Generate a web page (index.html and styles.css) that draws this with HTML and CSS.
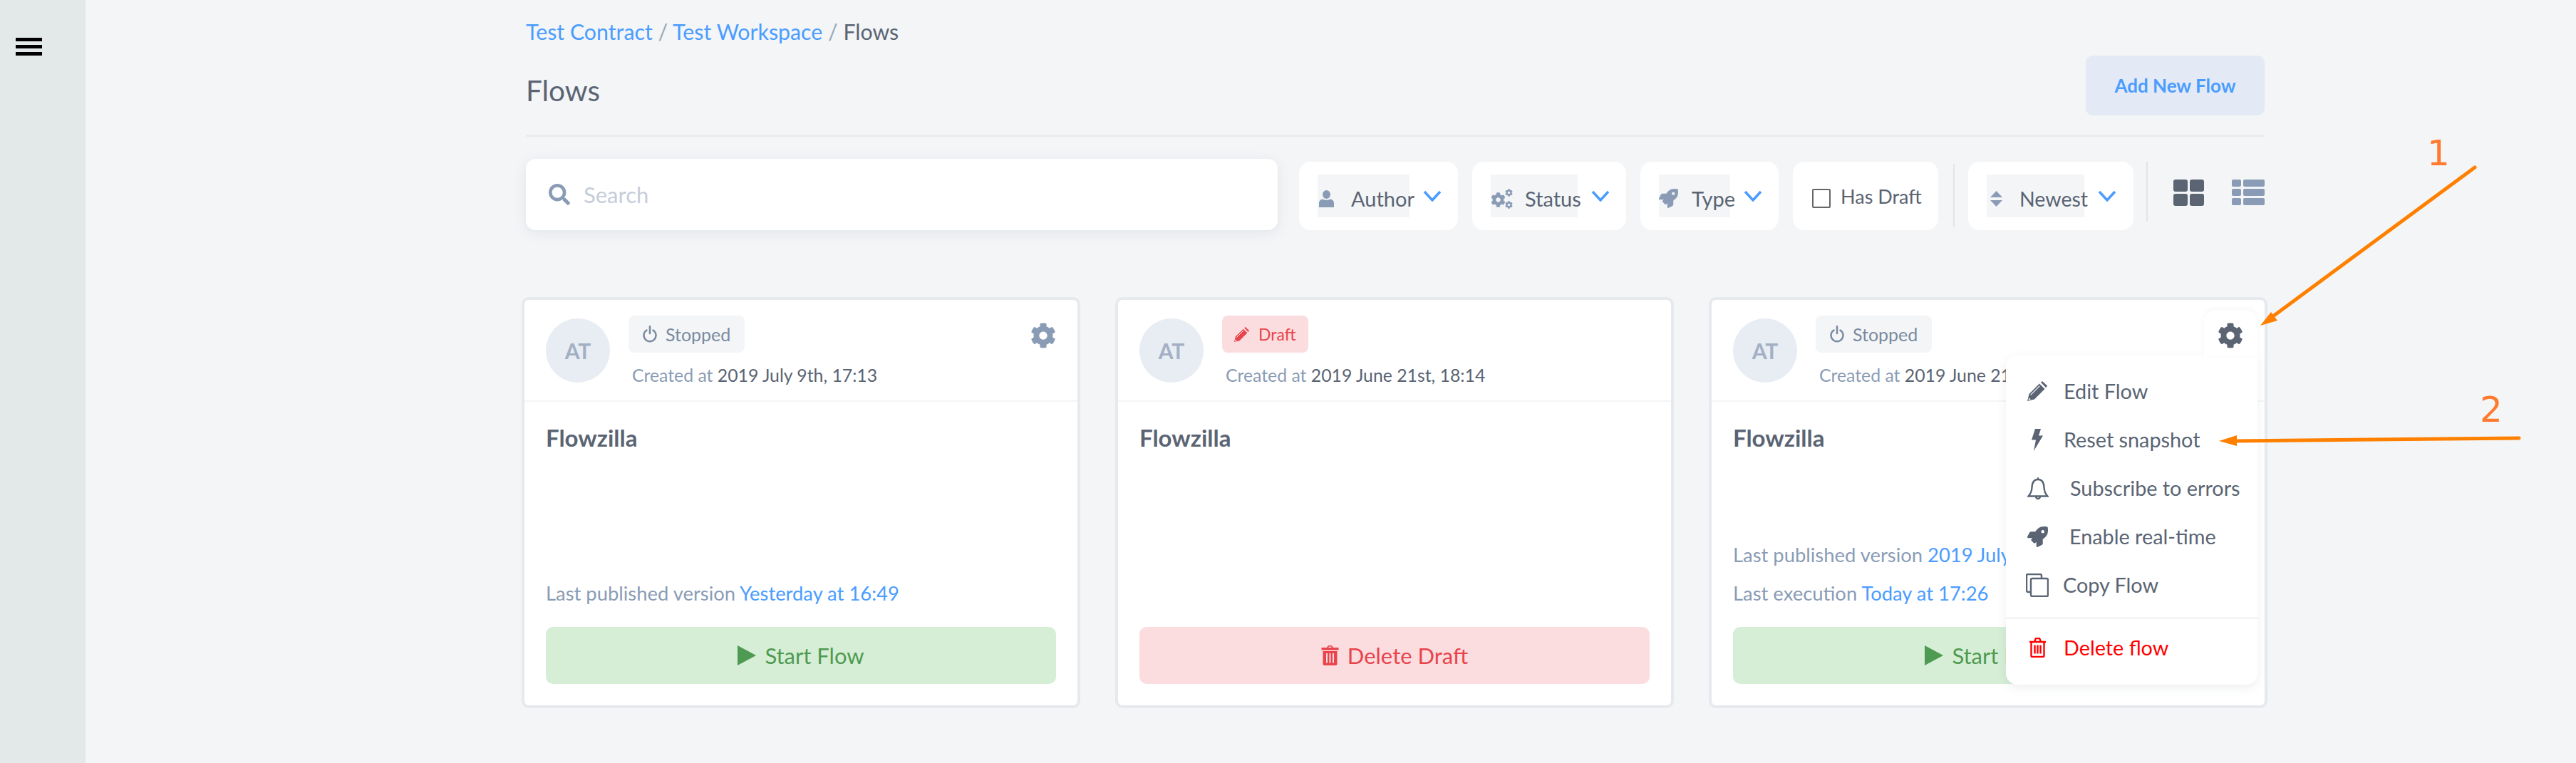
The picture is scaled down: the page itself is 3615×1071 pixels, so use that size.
FILE: index.html
```html
<!DOCTYPE html>
<html lang="en">
<head>
    <meta charset="UTF-8">
    <title>Flows</title>
    <link rel="stylesheet" href="styles.css">
</head>
<body>
    <svg class="icon-defs" width="0" height="0">
        <symbol id="i-gear" viewBox="0 0 512 512"><path d="M487.4 315.7l-42.6-24.6c4.3-23.2 4.3-47 0-70.2l42.6-24.6c4.9-2.8 7.1-8.6 5.5-14-11.1-35.6-30-67.8-54.7-94.6-3.8-4.1-10-5.1-14.8-2.3L380.8 110c-17.9-15.4-38.5-27.3-60.8-35.1V25.8c0-5.6-3.9-10.5-9.4-11.7-36.7-8.2-74.3-7.8-109.2 0-5.5 1.2-9.4 6.1-9.4 11.7V75c-22.2 7.9-42.8 19.8-60.8 35.1L88.7 85.5c-4.9-2.8-11-1.9-14.8 2.3-24.7 26.7-43.6 58.9-54.7 94.6-1.7 5.4.6 11.2 5.5 14L67.3 221c-4.3 23.2-4.3 47 0 70.2l-42.6 24.6c-4.9 2.8-7.1 8.6-5.5 14 11.1 35.6 30 67.8 54.7 94.6 3.8 4.1 10 5.1 14.8 2.3l42.6-24.6c17.9 15.4 38.5 27.3 60.8 35.1v49.2c0 5.6 3.9 10.5 9.4 11.7 36.7 8.2 74.3 7.8 109.2 0 5.5-1.2 9.4-6.1 9.4-11.7v-49.2c22.2-7.9 42.8-19.8 60.8-35.1l42.6 24.6c4.9 2.8 11 1.9 14.8-2.3 24.7-26.7 43.6-58.9 54.7-94.6 1.5-5.5-.7-11.3-5.6-14.1zM256 336c-44.1 0-80-35.9-80-80s35.9-80 80-80 80 35.9 80 80-35.9 80-80 80z"/></symbol>
        <symbol id="i-rocket" viewBox="0 0 512 512"><path d="M505.12 19.09c-1.19-5.53-6.66-11-12.21-12.19C460.72 0 435.51 0 410.41 0 307.18 0 245.27 55.2 199.05 128H94.84c-16.35.02-35.56 11.88-42.89 26.48L2.52 253.3A28.4 28.4 0 0 0 0 264a24 24 0 0 0 24 24h103.81l-22.47 22.47c-11.37 11.36-13 32.26 0 45.25l50.9 50.9c11.16 11.19 32.16 13.16 45.28 0L224 384.16V488a24 24 0 0 0 24 24 28.56 28.56 0 0 0 10.71-2.52l98.73-49.39c14.63-7.3 26.51-26.5 26.51-42.86V312.8c72.6-46.31 128.03-108.41 128.03-211.09.02-25.2.02-50.41-6.86-82.62zM384.04 168a40 40 0 1 1 40.01-40 40 40 0 0 1-40.01 40z"/></symbol>
        <symbol id="i-pencil" viewBox="0 0 28 28"><path d="M0 28L2.5 18 17 3.5 24.5 11 10 25.5z"/><path d="M19 1.8L21 0l7 6.5-1.8 2.8z"/><path d="M4.6 19.4L17.4 6.6" stroke="#fff" stroke-width="1.2"/><path d="M1.5 26.5l.8-3.2 2.4 2.4z" fill="#fff"/></symbol>
        <symbol id="i-trash" viewBox="0 0 24 28"><path fill-rule="evenodd" d="M7.5 3L9 .8C9.3.3 9.8 0 10.4 0h3.2c.6 0 1.1.3 1.4.8L16.5 3H23c.6 0 1 .4 1 1v2.5H0V4c0-.6.4-1 1-1zM9.6 3h4.8l-.9-1.4h-3zM2 8h20v18c0 1.100-.9 2-2 2H4c-1.100 0-2-.9-2-2zM6.500 11v13.500h2V11zM11 11v13.500h2V11zM15.500 11v13.500h2V11z"/></symbol>
    </svg>

    <aside class="sidebar">
        <div class="burger"><span></span><span></span><span></span></div>
    </aside>

    <main class="content">
        <nav class="crumbs">
            <a href="#">Test Contract</a> <span class="slash">/</span> <a href="#">Test Workspace</a> <span class="slash">/</span> <span class="here">Flows</span>
        </nav>

        <header class="page-head">
            <h1>Flows</h1>
            <button class="add-btn">Add New Flow</button>
        </header>

        <section class="toolbar">
            <div class="search">
                <svg class="search-icon" viewBox="0 0 512 512"><path d="M505 442.700L405.300 343c-4.500-4.500-10.600-7-17-7H372c27.600-35.300 44-79.700 44-128C416 93.100 322.900 0 208 0S0 93.100 0 208s93.100 208 208 208c48.300 0 92.700-16.400 128-44v16.300c0 6.400 2.500 12.500 7 17l99.700 99.700c9.400 9.400 24.600 9.400 33.900 0l28.300-28.300c9.400-9.400 9.400-24.600.1-34zM208 336c-70.700 0-128-57.200-128-128 0-70.700 57.200-128 128-128 70.700 0 128 57.200 128 128 0 70.700-57.200 128-128 128z"/></svg>
                <span>Search</span>
            </div>

            <div class="filter filter-author">
                <div class="filter-box">
                    <svg class="f-icon" width="21" height="24" viewBox="0 0 21 24"><ellipse cx="10.500" cy="6" rx="5.500" ry="6"/><path d="M0 24v-6c0-3 2-5 5-5.500 3 1.800 8 1.800 11 0 3 .5 5 2.500 5 5.500v6z"/></svg>
                    <span>Author</span>
                </div>
                <svg class="chev" viewBox="0 0 26 16"><path d="M2 2l11 12L24 2"/></svg>
            </div>
            <div class="filter filter-status">
                <div class="filter-box">
                    <svg class="f-icon" width="31" height="28" viewBox="0 0 31 28"><use href="#i-gear" x="0" y="5" width="21" height="21"/><use href="#i-gear" x="20" y="0" width="11" height="11"/><use href="#i-gear" x="20" y="17" width="11" height="11"/></svg>
                    <span>Status</span>
                </div>
                <svg class="chev" viewBox="0 0 26 16"><path d="M2 2l11 12L24 2"/></svg>
            </div>
            <div class="filter filter-type">
                <div class="filter-box">
                    <svg class="f-icon" width="27" height="27"><use href="#i-rocket"/></svg>
                    <span>Type</span>
                </div>
                <svg class="chev" viewBox="0 0 26 16"><path d="M2 2l11 12L24 2"/></svg>
            </div>
            <label class="filter filter-draft">
                <span class="check"></span>
                <span>Has Draft</span>
            </label>
            <div class="sep"></div>
            <div class="filter filter-sort">
                <div class="filter-box">
                    <svg class="f-icon" width="17" height="22" viewBox="0 0 17 22"><path d="M8.500 0L17 9H0zM0 13h17l-8.500 9z"/></svg>
                    <span>Newest</span>
                </div>
                <svg class="chev" viewBox="0 0 26 16"><path d="M2 2l11 12L24 2"/></svg>
            </div>
            <div class="sep sep-last"></div>
            <div class="view-grid"><i></i><i></i><i></i><i></i></div>
            <div class="view-list"><i></i><i></i><i></i><i></i><i></i><i></i></div>
        </section>

        <section class="cards">
            <article class="card">
                <div class="card-head">
                    <div class="avatar">AT</div>
                    <div class="card-info">
                        <span class="badge">
                            <svg class="badge-icon" viewBox="0 0 20 24"><path d="M5.500 6.500a8.500 8.500 0 1 0 9 0M10 1v10"/></svg>
                            Stopped
                        </span>
                        <div class="created">Created at <b>2019 July 9th, 17:13</b></div>
                    </div>
                    <svg class="card-gear"><use href="#i-gear"/></svg>
                </div>
                <div class="card-body">
                    <h2>Flowzilla</h2>
                    <div class="meta">
                        <p>Last published version <a href="#">Yesterday at 16:49</a></p>
                    </div>
                    <button class="big-btn start"><svg width="26" height="28" viewBox="0 0 26 28"><path d="M0 0l26 14L0 28z"/></svg>Start Flow</button>
                </div>
            </article>

            <article class="card">
                <div class="card-head">
                    <div class="avatar">AT</div>
                    <div class="card-info">
                        <span class="badge badge-draft">
                            <svg class="badge-pencil"><use href="#i-pencil"/></svg>
                            Draft
                        </span>
                        <div class="created">Created at <b>2019 June 21st, 18:14</b></div>
                    </div>
                </div>
                <div class="card-body">
                    <h2>Flowzilla</h2>
                    <div class="meta"></div>
                    <button class="big-btn danger"><svg width="25" height="28"><use href="#i-trash"/></svg>Delete Draft</button>
                </div>
            </article>

            <article class="card">
                <div class="card-head">
                    <div class="avatar">AT</div>
                    <div class="card-info">
                        <span class="badge">
                            <svg class="badge-icon" viewBox="0 0 20 24"><path d="M5.500 6.500a8.500 8.500 0 1 0 9 0M10 1v10"/></svg>
                            Stopped
                        </span>
                        <div class="created">Created at <b>2019 June 21</b></div>
                    </div>
                </div>
                <div class="card-body">
                    <h2>Flowzilla</h2>
                    <div class="meta">
                        <p>Last published version <a href="#">2019 July</a></p>
                        <p>Last execution <a href="#">Today at 17:26</a></p>
                    </div>
                    <button class="big-btn start"><svg width="26" height="28" viewBox="0 0 26 28"><path d="M0 0l26 14L0 28z"/></svg>Start Flow</button>
                </div>

                <div class="menu-wrap">
                    <div class="menu-tab"><svg class="card-gear"><use href="#i-gear"/></svg></div>
                    <ul class="menu">
                        <li class="row-edit"><svg class="m-icon" width="28" height="28"><use href="#i-pencil"/></svg>Edit Flow</li>
                        <li class="row-reset"><span class="m-slot"><svg class="m-icon" width="16" height="31" viewBox="0 0 16 31"><path d="M5 0h8l-3 9.500h6L3 31l3-15.500H0z"/></svg></span>Reset snapshot</li>
                        <li class="row-wide"><svg class="m-line" width="30" height="33" viewBox="0 0 30 33"><path d="M15 4C8.500 4 6.800 9.500 6.500 15c-.3 6-2.500 10-5 12.500h27c-2.500-2.500-4.700-6.500-5-12.500C23.200 9.500 21.500 4 15 4zM15 4V1.200M12 28a3 3 0 0 0 6 0"/></svg>Subscribe to errors</li>
                        <li class="row-wide"><svg class="m-icon" width="29" height="29"><use href="#i-rocket"/></svg>Enable real-time</li>
                        <li class="row-copy"><svg class="m-line" width="32" height="33" viewBox="0 0 32 33"><path d="M6 26H3a2 2 0 0 1-2-2V3a2 2 0 0 1 2-2h17a2 2 0 0 1 2 2v4"/><rect x="7" y="7" width="24" height="25" rx="2"/></svg>Copy Flow</li>
                        <li class="menu-delete"><span class="m-slot"><svg class="m-line" width="25" height="28" viewBox="0 0 25 28"><path d="M1 6h23M3.500 6v19.500a1.500 1.500 0 0 0 1.500 1.500h15a1.500 1.500 0 0 0 1.500-1.500V6M8 6l1.500-4.200a1 1 0 0 1 1-.8h4a1 1 0 0 1 1 .8L17 6M8.500 10.500v12M12.500 10.500v12M16.500 10.500v12"/></svg></span>Delete flow</li>
                    </ul>
                </div>
            </article>
        </section>
    </main>

    <!-- annotations drawn on top of the screenshot -->
    <svg class="notes" width="3615" height="1071" viewBox="0 0 3615 1071">
        <text x="3406" y="232">1</text>
        <text x="3480" y="592">2</text>
        <path class="note-line" d="M3473 235L3187 446"/>
        <path class="note-head" d="M3172 457l15-19 9 12z"/>
        <path class="note-line" d="M3535 615L3135 619"/>
        <path class="note-head" d="M3114 619l25-8v15z"/>
    </svg>
</body>
</html>
```

FILE: styles.css
```css
* {
    box-sizing: border-box;
}
html, body {
    margin: 0;
    height: 1071px;
    overflow: hidden;
}
body {
    position: relative;
    display: flex;
    background: #f3f5f7;
    color: #5a6473;
    font-family: Lato, "Noto Sans", sans-serif;
    font-size: 28px;
}
a {
    color: #4a9cff;
    text-decoration: none;
}
button {
    font-family: inherit;
    border: none;
}
.icon-defs {
    position: absolute;
}

/* sidebar */
.sidebar {
    width: 120px;
    flex: none;
    background: #e3e8e8;
    padding: 53px 0 0 22px;
}
.burger {
    display: flex;
    flex-direction: column;
    gap: 5px;
    width: 37px;
}
.burger span {
    height: 5px;
    background: #000;
}

/* head */
.content {
    margin-left: 618px;
    width: 2440px;
    flex: none;
}
.crumbs {
    padding-top: 26px;
    height: 78px;
    font-size: 30.300px;
    line-height: 36px;
    white-space: nowrap;
}
.slash {
    color: #9aa7b8;
}
.page-head {
    display: flex;
    justify-content: space-between;
    height: 114px;
    border-bottom: 3px solid #e9ebee;
}
.page-head h1 {
    margin: 24px 0 0;
    font-size: 40.500px;
    line-height: 50px;
    font-weight: 400;
}
.add-btn {
    width: 251px;
    height: 84px;
    border-radius: 10px;
    background: #e3eaf5;
    color: #4a9cff;
    font-size: 26px;
    font-weight: 700;
}

/* toolbar */
.toolbar {
    display: flex;
    align-items: flex-start;
    margin-top: 31px;
    height: 100px;
}
.search {
    display: flex;
    align-items: center;
    width: 1055px;
    height: 100px;
    padding-left: 32px;
    background: #fff;
    border-radius: 14px;
    box-shadow: 0 4px 18px rgba(90, 100, 115, .1);
    color: #c5cdda;
    font-size: 31px;
}
.search-icon {
    width: 30px;
    height: 30px;
    margin-right: 19px;
    fill: #8a9cb5;
}
.filter {
    display: flex;
    align-items: center;
    height: 96px;
    margin-top: 4px;
    margin-left: 20px;
    padding-left: 26px;
    background: #fff;
    border-radius: 16px;
    white-space: nowrap;
}
.filter-box {
    display: flex;
    align-items: center;
    height: 60px;
    padding-top: 7px;
    background: #f3f5f7;
    font-size: 29px;
}
.f-icon {
    fill: #8a9cb5;
    flex: none;
}
.chev {
    width: 26px;
    height: 16px;
    margin-left: 19px;
    fill: none;
    stroke: #4a9cff;
    stroke-width: 3.500;
}
.filter-author {
    margin-left: 30px;
    width: 223px;
}
.filter-author .filter-box {
    width: 129px;
    padding-left: 2px;
    gap: 24px;
}
.filter-status {
    width: 216px;
}
.filter-status .filter-box {
    width: 122px;
    gap: 17px;
}
.filter-type {
    width: 194px;
}
.filter-type .filter-box {
    width: 100px;
    gap: 19px;
}
.filter-draft {
    width: 204px;
    padding-left: 27px;
    gap: 14px;
    font-size: 27px;
}
.check {
    width: 26px;
    height: 27px;
    margin-top: 6px;
    border: 2px solid #666;
    border-radius: 2px;
    background: #fff;
}
.filter-sort {
    width: 232px;
    margin-left: 19px;
}
.filter-sort .filter-box {
    width: 137px;
    padding-left: 5px;
    gap: 24px;
    font-size: 28.500px;
}
.sep {
    width: 2px;
    height: 89px;
    margin: 7px 0 0 21px;
    background: #e2e5e9;
}
.sep-last {
    height: 84px;
    margin: 4px 0 0 18px;
}
.view-grid {
    display: grid;
    grid-template-columns: 20px 20px;
    gap: 3px;
    margin: 29px 0 0 36px;
}
.view-grid i {
    height: 17px;
    background: #5a6473;
    border-radius: 3px;
}
.view-list {
    display: grid;
    grid-template-columns: 13px 30px;
    gap: 3px;
    margin: 29px 0 0 39px;
}
.view-list i {
    height: 10px;
    background: #8a9cb5;
    border-radius: 2px;
}

/* cards */
.cards {
    display: grid;
    grid-template-columns: repeat(3, 784px);
    column-gap: 49px;
    margin: 94px 0 0 -6px;
}
.card {
    position: relative;
    display: flex;
    flex-direction: column;
    height: 577px;
    background: #fff;
    border: 4px solid #e6e9ed;
    border-radius: 10px;
}
.card-head {
    display: flex;
    height: 143px;
    padding: 22px 30px 0;
    border-bottom: 2px solid #f3f5f7;
}
.avatar {
    width: 90px;
    height: 90px;
    margin-top: 4px;
    flex: none;
    border-radius: 50%;
    background: #e8edf4;
    color: #a3b0c4;
    font-size: 30px;
    font-weight: 700;
    line-height: 90px;
    text-align: center;
}
.card-info {
    margin-left: 26px;
    flex: 1;
    min-width: 0;
}
.badge {
    display: inline-flex;
    align-items: center;
    height: 52px;
    padding: 0 20px;
    gap: 12px;
    background: #f3f5f7;
    border-radius: 8px;
    color: #7a8aa0;
    font-size: 25px;
}
.badge-icon {
    width: 20px;
    height: 24px;
    fill: none;
    stroke: #7a8aa0;
    stroke-width: 2.500;
    stroke-linecap: round;
}
.badge-draft {
    background: #fbdde0;
    color: #e8444b;
    padding: 0 18px 0 17px;
    gap: 13px;
    font-size: 23px;
}
.badge-pencil {
    width: 21px;
    height: 21px;
    fill: #e8444b;
}
.created {
    margin: 14px 0 0 5px;
    font-size: 24.800px;
    line-height: 36px;
    color: #8a9cb5;
    white-space: nowrap;
}
.created b {
    font-weight: 400;
    color: #5a6473;
}
.card-gear {
    width: 36px;
    height: 36px;
    margin-top: 10px;
    flex: none;
    fill: #8a9cb5;
}
.card-body {
    flex: 1;
    display: flex;
    flex-direction: column;
    padding: 30px 30px 30px;
    min-height: 0;
}
.card-body h2 {
    margin: 0;
    font-size: 33px;
    line-height: 40px;
    font-weight: 700;
    color: #5a6473;
}
.meta {
    margin-top: auto;
    margin-bottom: 20px;
    font-size: 27.400px;
    line-height: 54px;
    color: #8a9cb5;
    white-space: nowrap;
}
.meta p {
    margin: 0;
}
.big-btn {
    display: flex;
    align-items: center;
    justify-content: center;
    gap: 12px;
    flex: none;
    height: 80px;
    border-radius: 10px;
    font-size: 31px;
}
.big-btn svg {
    fill: currentColor;
}
.start {
    background: #d5eed5;
    color: #4f9a52;
}
.danger {
    background: #fbdde0;
    color: #e8444b;
}

/* open menu on third card */
.menu-wrap {
    position: absolute;
    top: 14px;
    right: 10px;
    width: 353px;
    display: flex;
    flex-direction: column;
    align-items: flex-end;
}
.menu-tab {
    position: relative;
    z-index: 1;
    width: 75px;
    height: 65px;
    margin-bottom: -1px;
    padding: 18px 0 0 19px;
    background: #fff;
    border-radius: 16px 16px 0 0;
    box-shadow: 0 -2px 6px rgba(90, 100, 115, .06);
}
.menu-tab .card-gear {
    margin: 0;
    fill: #5a6473;
}
.menu {
    width: 353px;
    height: 462px;
    margin: 0;
    padding: 0;
    list-style: none;
    background: #fff;
    border-radius: 16px 0 16px 16px;
    box-shadow: 0 4px 14px rgba(90, 100, 115, .1);
}
.menu li {
    display: flex;
    align-items: center;
    height: 68px;
    padding-left: 30px;
    gap: 23px;
    font-size: 28.800px;
    white-space: nowrap;
}
.m-icon {
    fill: #5a6473;
    flex: none;
}
.m-line {
    fill: none;
    stroke: #5a6473;
    stroke-width: 2.400;
    flex: none;
}
.m-slot {
    display: flex;
    justify-content: center;
    width: 28px;
    flex: none;
}
.menu .row-edit {
    margin-top: 16px;
}
.menu .row-wide {
    gap: 30px;
}
.menu .row-copy {
    gap: 20px;
    padding-left: 28px;
}
.menu .menu-delete {
    margin-top: 11px;
    height: 92px;
    padding-bottom: 9px;
    border-top: 3px solid #f3f5f7;
    color: #f00;
}
.menu-delete .m-line {
    stroke: #f00;
}

/* annotations */
.notes {
    position: absolute;
    top: 0;
    left: 0;
    pointer-events: none;
}
.notes text {
    font-family: "DejaVu Sans", sans-serif;
    font-size: 50px;
    fill: #ff7a2e;
}
.note-line {
    fill: none;
    stroke: #ff8000;
    stroke-width: 5;
    stroke-linecap: round;
}
.note-head {
    fill: #ff8000;
}
```
